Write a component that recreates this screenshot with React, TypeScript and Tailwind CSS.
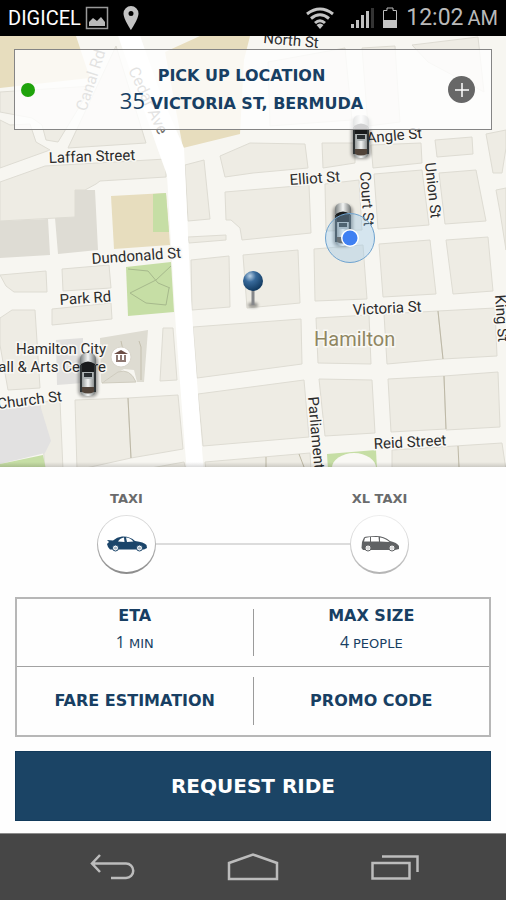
import React, { useState } from "react";

const blocks = [
  "268,62 345,48 352,120 270,126",
  "362,48 395,46 400,122 368,126",
  "412,45 478,37 484,92 428,62",
  "250,143 305,144 308,168 253,173 225,177 220,156",
  "322,143 355,143 355,163 323,168",
  "371,145 421,143 422,163 373,168",
  "435,140 472,137 473,154 437,157",
  "486,134 506,130 506,148 502,173 493,173",
  "185,165 204,160 210,219 188,221",
  "225,192 309,185 311,233 242,240 240,228 231,220 226,220",
  "188,237 226,235 226,240 189,243",
  "325,184 359,180 362,230 326,231",
  "374,174 422,170 429,225 378,229",
  "439,173 476,170 486,221 445,224",
  "496,190 506,188 506,250 500,212",
  "191,260 229,256 230,307 192,310",
  "243,255 298,250 300,303 247,308",
  "314,249 363,245 367,299 315,301",
  "379,244 430,240 436,294 383,297",
  "446,240 488,237 493,291 453,294",
  "193,327 301,319 302,364 197,378",
  "316,318 369,315 371,364 318,363",
  "384,314 438,311 443,359 387,364",
  "438,311 495,308 497,356 443,359",
  "198,394 304,380 309,437 203,446",
  "319,379 372,380 375,433 325,436",
  "388,379 444,376 446,429 391,432",
  "444,376 498,372 500,427 446,430",
  "205,462 310,453 311,470 206,470",
  "392,450 502,443 506,470 392,470",
  "0,120 10,125 30,124 36,142 50,150 0,168",
  "0,92 92,86 58,142 46,140 42,125 32,118 0,112",
  "116,46 146,143 68,148",
  "0,182 45,166 166,159 166,177 100,181 96,184 85,190 75,190 75,217 0,221",
  "0,275 46,271 47,292 14,292 6,286",
  "62,269 109,265 111,288 63,291",
  "52,309 111,303 112,319 52,325",
  "0,318 12,310 35,310 40,388 8,390 0,345",
  "163,328 173,328 177,380 160,381",
  "40,402 60,401 63,470 45,470",
  "75,400 128,398 131,458 77,470",
  "128,398 178,395 183,449 131,458",
  "140,470 184,462 186,470",
];

function TopCar({ x, y }: { x: number; y: number }) {
  return (
    <g transform={`translate(${x} ${y})`}>
      <rect x="-10" y="-20" width="20" height="42" rx="6" fill="#000" opacity="0.35" filter="url(#soft)" />
      <rect x="-8" y="-22" width="16" height="43" rx="6" fill="url(#carBody)" />
      <path d="M-7-11Q0-16 7-11V-3H-7z" fill="#191b1c" />
      <rect x="-8" y="-10" width="2" height="27" fill="#303536" />
      <rect x="6" y="-10" width="2" height="27" fill="#303536" />
      <rect x="-5" y="-3" width="10" height="7" fill="#aeb4b5" />
      <rect x="-4" y="-2" width="8" height="4" fill="#292e30" />
      <path d="M-6 12H6V17Q0 20-6 17z" fill="#51443a" />
    </g>
  );
}

function StreetMap() {
  return (
    <svg
      className="absolute inset-0 h-full w-full font-['Roboto',sans-serif]"
      viewBox="0 36 506 431"
      preserveAspectRatio="xMidYMid slice"
      role="img"
      aria-label="Map of Hamilton"
    >
      <defs>
        <linearGradient id="carBody" x1="0" x2="1">
          <stop offset="0" stopColor="#777d7d" />
          <stop offset="0.5" stopColor="#f3f5f4" />
          <stop offset="1" stopColor="#6b7070" />
        </linearGradient>
        <radialGradient id="pinBall" cx="0.35" cy="0.25" r="0.75">
          <stop offset="0" stopColor="#b9d1e6" />
          <stop offset="0.4" stopColor="#37699a" />
          <stop offset="1" stopColor="#123a60" />
        </radialGradient>
        <linearGradient id="edge" x1="0" x2="0" y1="0" y2="1">
          <stop offset="0" stopColor="#000" stopOpacity="0" />
          <stop offset="1" stopColor="#000" stopOpacity="0.14" />
        </linearGradient>
        <filter id="soft" x="-50%" y="-50%" width="200%" height="200%">
          <feGaussianBlur stdDeviation="1.5" />
        </filter>
      </defs>
      <rect x="-600" y="-600" width="1800" height="1800" fill="#f7f6f1" />
      <path d="M0 36H76L90 78 0 88z" fill="#e7ddbe" />
      <path d="M165 52L200 36H250L244 60 240 134 183 148z" fill="#e7ddbe" />
      <g fill="#eeece4" stroke="#dedcd3" strokeWidth="1">
        {blocks.map((points) => (
          <polygon key={points} points={points} />
        ))}
      </g>
      <path d="M0 221L48 219 50 255 0 258zM75 190H95L98 250 58 254 55 218 75 217z" fill="#dedcd4" />
      <path d="M111 196L166 193 170 245 114 249z" fill="#e7ddbe" />
      <path d="M153 194L166 193 169 232H153z" fill="#c6dea5" />
      <path d="M126 267L171 262 174 312 128 316z" fill="#c6dea5" />
      <path
        d="M128 269L148 271 158 283 170 288M171 266L156 280 130 293 146 303 166 305 169 288"
        fill="none"
        stroke="#a6b98c"
      />
      <path d="M56 340L83 338V383L57 385z" fill="#e1e0de" />
      <path d="M100 338L148 330 144 382H137L134 370 124 369 101 383z" fill="#dedcd2" />
      <path d="M139 341L141 347 141 380M121 341L123 350" fill="none" stroke="#c4bfae" />
      <path d="M102 383L118 372Q130 368 136 382z" fill="#dedcd2" stroke="#cfccbf" />
      <path d="M0 407L40 405 51 441 45 453 0 464z" fill="#e2e1e1" />
      <path d="M0 464L43 455 46 470H0z" fill="#c6dea5" />
      <path d="M327 454L376 450 377 470H328z" fill="#c6dea5" />
      <ellipse cx="354" cy="468" rx="22" ry="15" fill="#f9f8f4" />
      <path
        d="M438 311L443 359M444 376L446 429M458 446L459 467M128 398L131 458M266 457V467M299 454L304 467"
        fill="none"
        stroke="#bdb8a5"
      />
      <path d="M116 30H138L161 95 184 148 185 168 191 300 204 475H187L176 330 167 175 158 150z" fill="#fff" />

      <g fill="#2c2c2c" stroke="#f9f8f4" strokeWidth="3" paintOrder="stroke" fontSize="15">
        <text x="263" y="43" transform="rotate(5 263 43)">North St</text>
        <text x="49" y="163" transform="rotate(-2 49 163)">Laffan Street</text>
        <text x="92" y="264" transform="rotate(-4 92 264)">Dundonald St</text>
        <text x="60" y="305" transform="rotate(-4 60 305)">Park Rd</text>
        <text x="290" y="185" transform="rotate(-4 290 185)">Elliot St</text>
        <text x="367" y="143" transform="rotate(-5 367 143)">Angle St</text>
        <text x="353" y="315" transform="rotate(-3 353 315)">Victoria St</text>
        <text x="374" y="449" transform="rotate(-3 374 449)">Reid Street</text>
        <text x="-2" y="409" transform="rotate(-7 -2 409)">Church St</text>
        <text x="360" y="172" transform="rotate(86 360 172)">Court St</text>
        <text x="425" y="163" transform="rotate(84 425 163)">Union St</text>
        <text x="495" y="295" transform="rotate(86 495 295)">King St</text>
        <text x="308" y="397" transform="rotate(85 308 397)">Parliament</text>
        <text x="106" y="354" textAnchor="end">Hamilton City</text>
        <text x="106" y="372" textAnchor="end">Hall &amp; Arts Centre</text>
      </g>
      <g fill="#73726e" fontSize="16">
        <text x="86" y="112" transform="rotate(-72 86 112)">Canal Rd</text>
        <text x="128" y="70" transform="rotate(65 128 70)">Cedar Ave</text>
      </g>
      <text x="314" y="346" fill="#8f8662" stroke="#f9f8f4" strokeWidth="3" paintOrder="stroke" fontSize="20">
        Hamilton
      </text>

      <circle cx="121" cy="357" r="10" fill="#fff" stroke="#d9d6cc" />
      <path d="M114 354L121 350 128 354z" fill="#6b4d45" />
      <path d="M117 355V360M121 355V360M125 355V360M116 361H126" fill="none" stroke="#6b4d45" strokeWidth="1.5" />
      <TopCar x={361} y={137} />
      <TopCar x={343} y={225} />
      <TopCar x={88} y={375} />
      <circle cx="350" cy="238" r="24.5" fill="#94c5ec" fillOpacity="0.35" stroke="#6fa3cf" />
      <circle cx="350" cy="238" r="9" fill="#fff" />
      <circle cx="350" cy="238" r="7.5" fill="#3f80f2" />
      <ellipse cx="253" cy="305" rx="5" ry="2.5" fill="#000" opacity="0.4" filter="url(#soft)" />
      <path d="M253 288V305" stroke="#85878a" strokeWidth="3" />
      <circle cx="253" cy="281" r="10" fill="url(#pinBall)" />
      <rect x="-600" y="462" width="1800" height="5" fill="url(#edge)" />
    </svg>
  );
}

function StatusBar() {
  return (
    <header className="flex h-9 items-center justify-between bg-black px-2 font-['Roboto',sans-serif]">
      <div className="flex items-center gap-1">
        <span className="text-xl text-white">DIGICEL</span>
        <svg className="h-6 w-6" viewBox="0 0 24 24" aria-hidden="true">
          <rect x="1.5" y="1.5" width="21" height="21" fill="none" stroke="#999" strokeWidth="1.5" />
          <path d="M4 20V16L8 12 12 15 16 11 20 16V20z" fill="#b9b9b9" />
        </svg>
        <svg className="ml-2 h-6 w-5" viewBox="-2 0 20 24" aria-hidden="true">
          <path
            fillRule="evenodd"
            d="M8 0a7.5 7.5 0 0 0-7.5 7.5C.5 13 8 24 8 24s7.500-11 7.500-16.500A7.500 7.500 0 0 0 8 0zm0 5a2.500 2.500 0 1 1 0 5 2.500 2.500 0 0 1 0-5z"
            fill="#c3c3c3"
          />
        </svg>
      </div>
      <div className="flex items-center gap-2 text-[#b9b9b9]">
        <svg className="mr-2 h-6 w-7" viewBox="0 0 28 24" aria-hidden="true" fill="none" stroke="#c4c4c4" strokeWidth="3">
          <path d="M1 8Q14-2 27 8M5 12.500Q14 5 23 12.500M9 17Q14 12.500 19 17" />
          <path d="M10.500 19Q14 16 17.500 19L14 23z" fill="#c4c4c4" stroke="none" />
        </svg>
        <svg className="h-6 w-6" viewBox="0 0 24 24" aria-hidden="true" fill="#c0c0c0">
          <path d="M1 18H4V22H1zM6 14H9V22H6zM11 9H14V22H11zM16 5H19V22H16z" />
          <path d="M21 2H24V22H21z" fill="#333" />
        </svg>
        <svg className="h-6 w-4" viewBox="0 0 16 24" aria-hidden="true">
          <path d="M1.500 4.500H5V2H11V4.500H14.500V21.500H1.500z" fill="none" stroke="#bbb" />
          <path d="M1 14H15V22H1z" fill="#c4c4c4" />
        </svg>
        <span className="flex items-baseline gap-1 text-[23px]">
          12:02 <span className="text-xl">AM</span>
        </span>
      </div>
    </header>
  );
}

function SedanIcon() {
  return (
    <svg className="h-4 w-10" viewBox="0 0 40 16" aria-hidden="true">
      <path
        d="M0 4L6 4.500Q10 1 15 .5 23 0 28 5 37 6 39.500 9L40 12 37 13.500H3L1 11 0 8 2 6z"
        fill="#1b456a"
      />
      <path d="M11 5.500Q13 2 17 1.500L17.500 6zM19 1.500Q23 1.500 26.500 5.500L20 6z" fill="#fff" />
      <circle cx="8.500" cy="12" r="3" fill="#fff" stroke="#1b456a" />
      <circle cx="32.500" cy="12" r="3" fill="#fff" stroke="#1b456a" />
      <circle cx="8.500" cy="12" r="1.500" fill="#1b456a" opacity="0.4" />
      <circle cx="32.500" cy="12" r="1.500" fill="#1b456a" opacity="0.4" />
    </svg>
  );
}

function VanIcon() {
  return (
    <svg className="h-4 w-10" viewBox="0 0 40 16" aria-hidden="true">
      <path d="M2 6L4 1.500Q6 0 16 0 24 0 30 5 37 6.500 39 10V13L35 14H3L1.500 12z" fill="#606264" />
      <path d="M4 5.500L5 2 10 1V5.500zM11 1H18.500L19 5.500H11zM20 1.500Q25 2 29.500 6L20 5.500z" fill="#fff" />
      <circle cx="8" cy="12" r="3" fill="#fff" stroke="#606264" />
      <circle cx="32" cy="12" r="3" fill="#fff" stroke="#606264" />
      <circle cx="8" cy="12" r="2" fill="#ddd" />
      <circle cx="32" cy="12" r="2" fill="#ddd" />
    </svg>
  );
}

const rides = [
  { id: "taxi", label: "TAXI", Icon: SedanIcon, ring: "from-[#e0e0e0] to-[#8b8b8b]" },
  { id: "xl", label: "XL TAXI", Icon: VanIcon, ring: "from-[#eeeeee] to-[#b4b4b4]" },
];

function RidePicker() {
  const [ride, setRide] = useState("taxi");
  return (
    <fieldset className="relative grid grid-cols-2 pt-6 pb-[23px]">
      <div className="absolute top-[76px] right-1/4 left-1/4 h-[2px] bg-[#dcdcdc]" />
      {rides.map(({ id, label, Icon, ring }) => (
        <label key={id} className="relative flex cursor-pointer flex-col items-center gap-2">
          <input
            type="radio"
            name="ride"
            value={id}
            checked={ride === id}
            onChange={() => setRide(id)}
            className="sr-only"
          />
          <span className="text-[13px] leading-4 font-bold text-[#6a6b6c]">{label}</span>
          <span className={`rounded-full bg-linear-to-b p-px pb-[2px] ${ring}`}>
            <span className="flex h-[56px] w-[57px] items-center justify-center rounded-full bg-white">
              <Icon />
            </span>
          </span>
        </label>
      ))}
    </fieldset>
  );
}

function Divider() {
  return <div className="my-[10px] w-px bg-[#9b9b9b]" />;
}

function Fact({ title, amount, unit }: { title: string; amount: string; unit: string }) {
  return (
    <div className="flex flex-1 basis-0 flex-col items-center justify-center gap-1 pb-1">
      <span className="text-base leading-5 font-bold">{title}</span>
      <span className="flex items-baseline gap-1 text-base leading-6">
        <span className="font-['Open_Sans',sans-serif]">{amount}</span>
        <span className="text-[13px]">{unit}</span>
      </span>
    </div>
  );
}

function NavBar() {
  return (
    <nav className="flex h-[67px] items-center justify-center gap-[92px] border-t border-[#8b8b8b] bg-[#464646]">
      <button type="button" aria-label="Back">
        <svg className="h-7 w-12" viewBox="0 0 48 28" fill="none" stroke="#bcbcbc" strokeWidth="2.500">
          <path d="M13 2L5 10.500 13 19M5 10.500H39A7 7 0 0 1 39 25H24" />
        </svg>
      </button>
      <button type="button" aria-label="Home">
        <svg className="h-7 w-[52px]" viewBox="0 0 52 28" fill="none" stroke="#bcbcbc" strokeWidth="2.500">
          <path d="M2 10L26 1.500 50 10V26H2z" />
        </svg>
      </button>
      <button type="button" aria-label="Recent apps">
        <svg className="h-7 w-12" viewBox="0 0 48 28" fill="none" stroke="#bcbcbc" strokeWidth="2.500">
          <path d="M1.500 10H38.500V25.500H1.500zM11 3.500H46.500V19" />
        </svg>
      </button>
    </nav>
  );
}

export default function App() {
  return (
    <div className="flex min-h-screen flex-col bg-[#fefefe] font-['DejaVu_Sans',sans-serif] text-[#183f63]">
      <StatusBar />
      <main className="flex flex-1 flex-col">
        <section className="relative min-h-[320px] flex-1 overflow-hidden">
          <StreetMap />
          <div className="relative mx-[14px] mt-[13px] flex h-[81px] items-center border border-[#858585] bg-white/80 pr-4 pl-[6px]">
            <span className="h-[14px] w-[14px] rounded-full bg-[#1fa30b]" />
            <div className="flex-1 text-center text-base leading-[26px] font-bold">
              <h1>PICK UP LOCATION</h1>
              <p>
                <span className="font-['Open_Sans',sans-serif] text-[22px] leading-none font-normal">35</span> VICTORIA ST, BERMUDA
              </p>
            </div>
            <button
              type="button"
              aria-label="Add destination"
              className="flex h-[27px] w-[27px] items-center justify-center rounded-full bg-[#676767]"
            >
              <svg className="h-4 w-4" viewBox="0 0 16 16" stroke="#fff" strokeWidth="1.500">
                <path d="M8 1V15M1 8H15" />
              </svg>
            </button>
          </div>
        </section>

        <section>
          <RidePicker />
          <div className="mx-[15px] border-2 border-[#b7b7b7]">
            <div className="flex h-[68px] border-b border-[#a2a2a2]">
              <Fact title="ETA" amount="1" unit="MIN" />
              <Divider />
              <Fact title="MAX SIZE" amount="4" unit="PEOPLE" />
            </div>
            <div className="flex h-[68px] text-base font-bold">
              <button type="button" className="flex-1 basis-0">FARE ESTIMATION</button>
              <Divider />
              <button type="button" className="flex-1 basis-0">PROMO CODE</button>
            </div>
          </div>
          <div className="px-[15px] pt-[14px] pb-3">
            <button
              type="button"
              className="h-[70px] w-full border border-[#123a5b] bg-[#1b4465] text-xl font-bold text-white"
            >
              REQUEST RIDE
            </button>
          </div>
        </section>
      </main>
      <NavBar />
    </div>
  );
}
